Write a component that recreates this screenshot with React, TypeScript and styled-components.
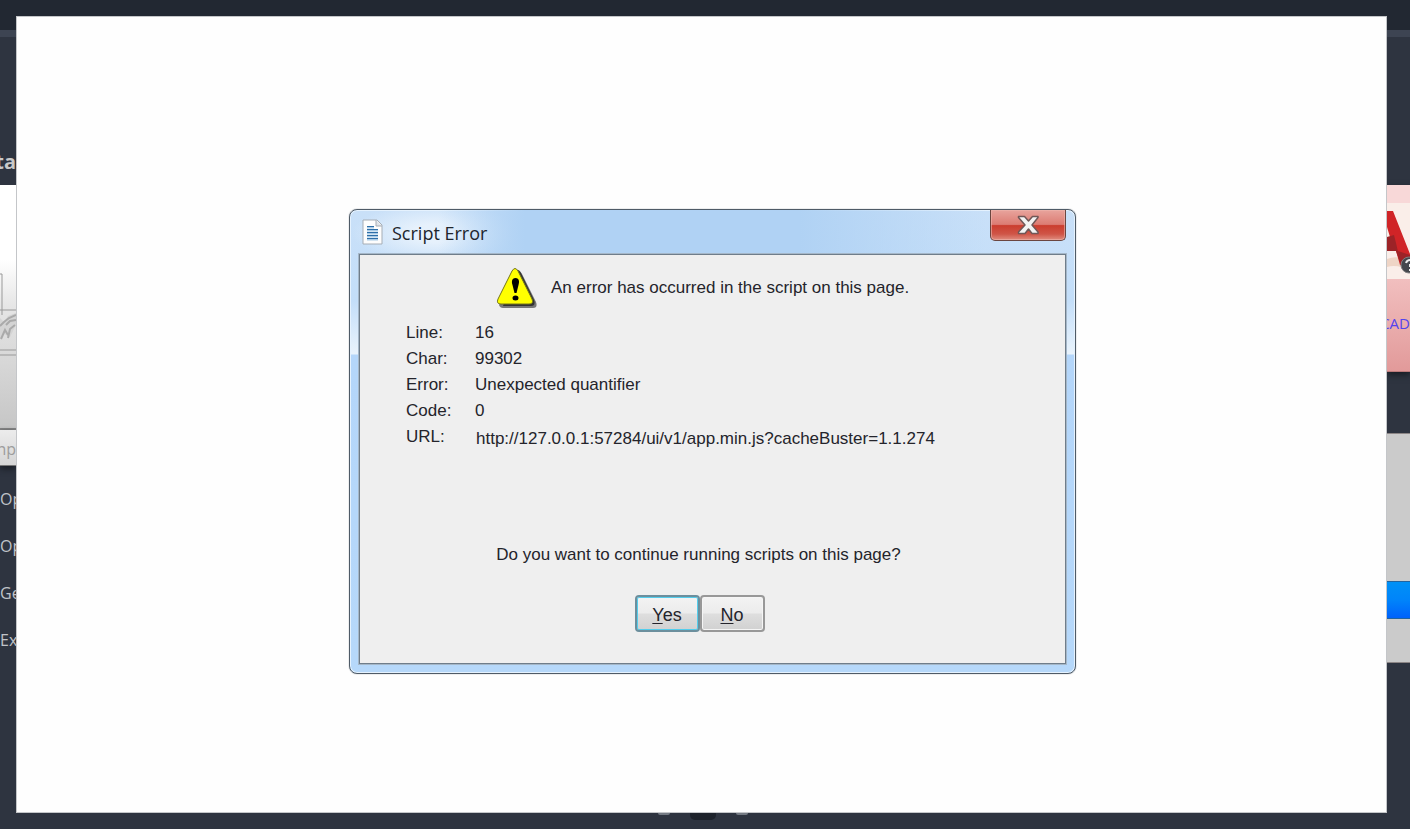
import React from "react";
import styled, { createGlobalStyle } from "styled-components";

const ui = `"Liberation Sans", Arial, sans-serif`;
const segoe = `"Open Sans", "Noto Sans", sans-serif`;

const GlobalStyle = createGlobalStyle`
  * { box-sizing: border-box; }
  body { margin: 0; background: #2e3440; }
`;

const Page = styled.div`
  min-height: 100vh;
  display: flex;
  flex-direction: column;
  padding-top: 16px;
  overflow: hidden;
  background: linear-gradient(#222832 0 30px, #3d4452 30px 37px, #2e3440 37px);
`;

const Body = styled.div`
  flex: 1;
  display: grid;
  grid-template-columns: 16px minmax(0, 1fr) 23px;
`;

const Side = styled.aside`
  overflow: hidden;
  min-width: 0;
  font-family: ${segoe};
  white-space: nowrap;
`;

const SideHeading = styled.h2`
  margin: 0;
  padding-top: 132px;
  height: 169px;
  display: flex;
  justify-content: flex-end;
  font-size: 20px;
  line-height: 28px;
  font-weight: 700;
  color: #c9c9c9;
`;

const Preview = styled.div`
  height: 245px;
  border-bottom: 2px solid #868686;
  background: linear-gradient(#ffffff 0 75px, #e6e6e6 120px, #c6c6c6);
`;

const PreviewTab = styled.div`
  height: 36px;
  background: linear-gradient(#ececec, #d6d6d6);
  border-bottom: 1px solid #777;
  box-shadow: 0 3px 6px #191d24;
  display: flex;
  justify-content: flex-end;
  font-size: 16px;
  line-height: 38px;
  color: #9d9d9d;
`;

const SideLinks = styled.nav`
  display: flex;
  flex-direction: column;
  padding-top: 10px;
`;

const SideLink = styled.a`
  height: 47px;
  font-size: 16px;
  line-height: 47px;
  color: #c0c3c8;
  text-decoration: none;
`;

const Card = styled.div`
  margin-top: 169px;
  height: 187px;
  background: linear-gradient(#f8d8d8 0 18px, #f1bfbf 94px, #e29a9a);
  border-bottom: 1px solid #bd7b7b;
  box-shadow: 0 3px 6px #191d24;
`;

const CardArt = styled.svg`
  display: block;
  padding-top: 18px;
`;

const CardLabel = styled.a`
  display: flex;
  justify-content: flex-end;
  padding-top: 32px;
  font-size: 15px;
  line-height: 24px;
  color: #5344ee;
  text-decoration: none;
`;

const SignIn = styled.div`
  margin-top: 61px;
  height: 230px;
  padding-top: 147px;
  background: #cbcbcb;
  border-top: 1px solid #8c8686;
  border-bottom: 1px solid #8c8686;
`;

const SignInButton = styled.button`
  display: block;
  width: 100%;
  height: 38px;
  border: 0;
  border-top: 1px solid #23649f;
  border-bottom: 1px solid #23649f;
  background: linear-gradient(#0091f6, #0084fa 50%, #0062fb);
`;

const Canvas = styled.main`
  display: flex;
  justify-content: center;
  align-items: center;
  padding: 54px 0 0 22px;
  background: #fefefe;
  box-shadow: inset 0 0 0 1px #c4c6c9;
`;

const Dialog = styled.section`
  width: 727px;
  max-width: 100%;
  padding: 0 9px 9px;
  border: 1px solid #4f5b67;
  border-radius: 8px;
  background:
    radial-gradient(ellipse 84px 30px at 86px 23px, #e6f1fc 30%, #e6f1fc00),
    linear-gradient(#c9e0f8 0, #c3def9 90px, #e9f3fc 144px, #b4d6fa 145px, #b6d8fa);
  box-shadow: inset 0 0 0 1px #e5f2fe, 0 0 1px #4f5b67;
`;

const TitleBar = styled.header`
  display: flex;
  align-items: flex-start;
  height: 44px;
  margin: 0 -7px;
  padding: 0 7px 0 8px;
  border-radius: 6px 6px 0 0;
  background: linear-gradient(90deg, #b0d2f400 12%, #b0d2f4 24%, #b0d2f4 62%, #c6dff800 88%);
`;

const FileIcon = styled.svg`
  margin: 9px 9px 0 2px;
`;

const Title = styled.h1`
  flex: 1;
  margin: 0;
  padding-top: 10px;
  font-family: ${segoe};
  font-size: 18px;
  line-height: 26px;
  font-weight: 400;
  color: #20252c;
`;

const CloseButton = styled.button`
  display: flex;
  justify-content: center;
  align-items: center;
  width: 76px;
  height: 31px;
  padding: 0;
  border: 1px solid #6b4640;
  border-top: 0;
  border-radius: 0 0 5px 5px;
  background: linear-gradient(#e8a49d, #dc7c73 48%, #cb3d2e 52%, #cf5547 80%, #e08d80);
  box-shadow: inset 0 0 0 1px #eeb5ae99;
`;

const Content = styled.div`
  border: 1px solid #6f7d8a;
  box-shadow: 0 0 0 1px #a5b7c8;
  background: #efefef;
  height: 410px;
  padding-top: 9px;
  font-family: ${ui};
  font-size: 17px;
  line-height: 26px;
  color: #24242b;
`;

const Message = styled.div`
  display: flex;
  align-items: center;
  gap: 12px;
  height: 48px;
  padding-left: 135px;
`;

const Details = styled.dl`
  display: grid;
  grid-template-columns: 69px 1fr;
  margin: 8px 0 0;
  padding-left: 46px;
`;

const Term = styled.dt`
  line-height: 26px;
`;

const Value = styled.dd<{ $field?: boolean }>`
  margin: 0;
  padding: ${(p) => (p.$field ? "2px 0 0 1px" : "0")};
`;

const Question = styled.p`
  margin: 90px 0 0;
  padding-right: 28px;
  text-align: center;
`;

const Actions = styled.div`
  display: flex;
  justify-content: center;
  padding: 27px 26px 0 0;
`;

const DialogButton = styled.button<{ $primary?: boolean }>`
  width: 65px;
  height: 37px;
  padding: 2px 0 0;
  border: 2px solid ${(p) => (p.$primary ? "#6c8f9d" : "#989898")};
  border-radius: 4px;
  background: linear-gradient(#f3f3f3, #ececec 48%, #dedede 52%, #d1d1d1);
  box-shadow: inset 0 0 0 1px ${(p) => (p.$primary ? "#54cdec" : "#f5f5f5")};
  font-family: ${ui};
  font-size: 18px;
  line-height: 26px;
  color: #24242b;
`;

const Key = styled.span`
  text-decoration: underline;
  text-underline-offset: 2px;
`;

const Footer = styled.footer`
  display: flex;
  justify-content: center;
  gap: 20px;
  height: 16px;
  padding-right: 4px;
`;

const Dot = styled.span<{ $active?: boolean }>`
  width: ${(p) => (p.$active ? 26 : 12)}px;
  height: ${(p) => (p.$active ? 7 : 2)}px;
  border-radius: 0 0 5px 5px;
  background: ${(p) => (p.$active ? "#1d222b" : "#747a83")};
`;

const details = [
  { term: "Line:", value: "16" },
  { term: "Char:", value: "99302" },
  { term: "Error:", value: "Unexpected quantifier" },
  { term: "Code:", value: "0" },
  { term: "URL:", value: "http://127.0.0.1:57284/ui/v1/app.min.js?cacheBuster=1.1.274", field: true },
];

const links = ["Op", "Op", "Ge", "Ex"];

export default function App() {
  return (
    <>
      <GlobalStyle />
      <Page>
        <Body>
          <Side>
            <SideHeading>ta</SideHeading>
            <Preview>
              <svg width="16" height="200" viewBox="0 0 16 200" fill="none" aria-hidden="true">
                <path d="M0 89h2v41M0 125h16" stroke="#999" />
                <path d="M0 133l4 4 4-6 8-3v12l-6 12-6-3-4 5z" fill="#d4d4d4" />
                <path d="M0 141l4-4 5-4 7-3M1 154l4-9 3 5M8 153l2-9 5-4M6 140l4-4 6-1" stroke="#aaa" strokeWidth="2" />
                <path d="M0 165h16M0 170h16" stroke="#999" />
              </svg>
            </Preview>
            <PreviewTab>np</PreviewTab>
            <SideLinks>
              {links.map((label, i) => (
                <SideLink href="#" key={i}>{label}</SideLink>
              ))}
            </SideLinks>
          </Side>

          <Canvas>
            <Dialog role="dialog" aria-labelledby="dialog-title">
              <TitleBar>
                <FileIcon width="21" height="26" viewBox="0 0 21 26" aria-hidden="true">
                  <path d="M1 1h14l5 5v19H1z" fill="#fdfdfd" stroke="#a6adb5" />
                  <path d="M14 1v6h6" fill="#dfe3e8" stroke="#a6adb5" />
                  <path d="M5 8.500h7M5 11.500h11M5 14.500h11M5 17.500h11M5 20.500h11" stroke="#a9cbe6" strokeWidth="2" />
                  <path d="M5 7.500h7M5 10.500h11M5 13.500h11M5 16.500h11M5 19.500h11" stroke="#2f6fa8" />
                </FileIcon>
                <Title id="dialog-title">Script Error</Title>
                <CloseButton aria-label="Close">
                  <svg width="22" height="20" viewBox="0 0 22 20" aria-hidden="true">
                    <path
                      d="M1.500 1.500h6l4 4.500 4-4.500h5.500v1L15 10l6 7v1.500h-6l-3.500-4.500L8 18.500H1.500V17L8 10 1.500 2.500z"
                      fill="#f3f3f3"
                      stroke="#705757"
                      strokeWidth="1.500"
                      strokeLinejoin="round"
                    />
                  </svg>
                </CloseButton>
              </TitleBar>
              <Content>
                <Message>
                  <svg width="44" height="44" viewBox="0 0 44 44" aria-hidden="true">
                    <path d="M22 5q3-1 5 3l14 28q2 6-3 6H8q-3 0-4-3z" fill="#777" />
                    <path d="M21 4q3-1 5 3l13 27q2 6-3 6H8z" fill="#333" />
                    <path
                      d="M17 5q3-5 6 0l14 28q2 5-3 5H6q-5 0-3-5z"
                      fill="#ffff00"
                      stroke="#74741b"
                      strokeWidth="1"
                    />
                    <path d="M20.500 12c4 0 4 4 3 7l-2 8h-2l-2-8c-1-3-1-7 3-7z" fill="#000" />
                    <ellipse cx="20.500" cy="32" rx="3" ry="2.500" fill="#000" />
                  </svg>
                  <span>An error has occurred in the script on this page.</span>
                </Message>
                <Details>
                  {details.map((d) => (
                    <React.Fragment key={d.term}>
                      <Term>{d.term}</Term>
                      <Value $field={d.field}>{d.value}</Value>
                    </React.Fragment>
                  ))}
                </Details>
                <Question>Do you want to continue running scripts on this page?</Question>
                <Actions>
                  <DialogButton $primary><Key>Y</Key>es</DialogButton>
                  <DialogButton><Key>N</Key>o</DialogButton>
                </Actions>
              </Content>
            </Dialog>
          </Canvas>

          <Side>
            <Card>
              <CardArt width="23" height="94" viewBox="0 0 23 76" aria-hidden="true">
                <rect width="23" height="76" fill="#faeee9" />
                <path d="M0 56q12-5 23 4v8q-12-7-23-4z" fill="#efd5c6" />
                <path d="M0 8h6l17 43v10L13 62 9 48H0V34h3L0 24z" fill="#d02427" />
                <path d="M0 34l7-2 2 8 5 22-5-14H0zM11 48l12 4v10l-9 1z" fill="#9c2327" />
                <circle cx="22" cy="62" r="8" fill="#45484d" stroke="#807f80" />
                <path d="M19 60q1-3 4-3M23 61v3M22 67h1" stroke="#eee" strokeWidth="2" fill="none" />
              </CardArt>
              <CardLabel href="#">CAD</CardLabel>
            </Card>
            <SignIn>
              <SignInButton aria-label="Sign in" />
            </SignIn>
          </Side>
        </Body>
        <Footer>
          <Dot />
          <Dot $active />
          <Dot />
        </Footer>
      </Page>
    </>
  );
}
